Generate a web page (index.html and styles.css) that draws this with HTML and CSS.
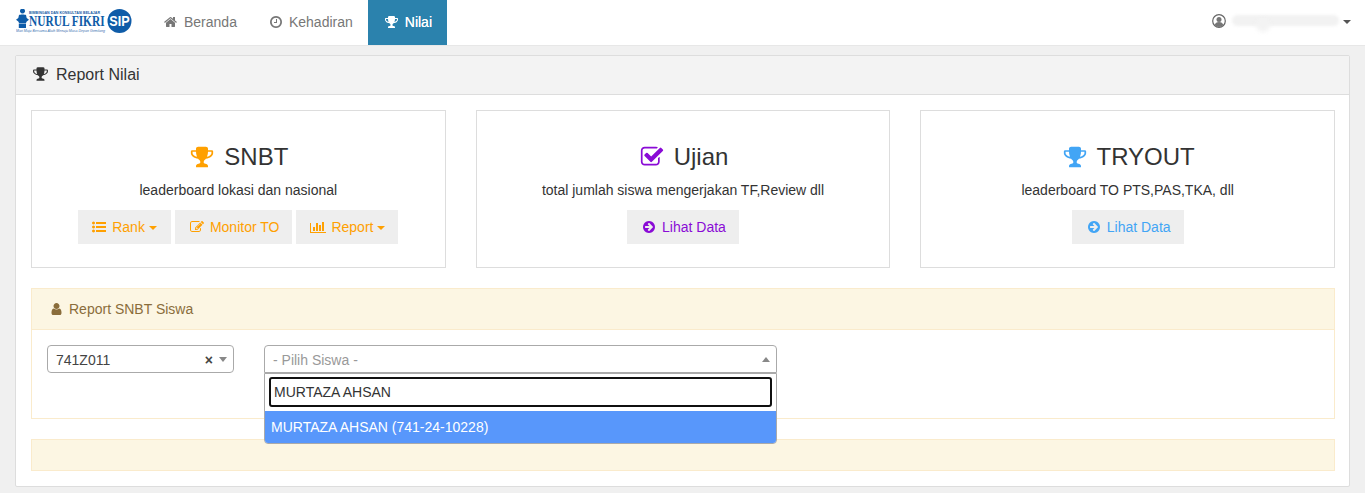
FILE: index.html
```html
<!DOCTYPE html>
<html lang="id">
<head>
<meta charset="utf-8">
<title>Report Nilai</title>
<link rel="stylesheet" href="styles.css">
</head>
<body>
<svg class="defs" width="0" height="0" aria-hidden="true">
  <symbol id="i-trophy" viewBox="64 0 1664 1792"><path d="M522 883q-74-162-74-371h-256v96q0 78 94.5 162t235.5 113zm1078-275v-96h-256q0 209-74 371 141-29 235.5-113t94.5-162zm128-128v128q0 71-41.5 143t-112 130-173 97.5-215.5 44.5q-42 54-95 95-38 34-52.5 72.5t-14.5 89.5q0 54 30.5 91t97.5 37q75 0 133.5 45.5t58.5 114.5v64q0 14-9 23t-23 9h-832q-14 0-23-9t-9-23v-64q0-69 58.5-114.5t133.5-45.5q67 0 97.5-37t30.5-91q0-51-14.5-89.5t-52.5-72.5q-53-41-95-95-113-5-215.5-44.5t-173-97.5-112-130-41.5-143v-128q0-40 28-68t68-28h288v-96q0-66 47-113t113-47h576q66 0 113 47t47 113v96h288q40 0 68 28t28 68z"/></symbol>
  <symbol id="i-home" viewBox="64 0 1664 1792"><path d="M1472 992v480q0 26-19 45t-45 19h-384v-384h-256v384h-384q-26 0-45-19t-19-45v-480q0-1 .5-3t.5-3l575-474 575 474q1 2 1 6zm223-69l-62 74q-8 9-21 11h-3q-13 0-21-7l-692-577-692 577q-12 8-24 7-13-2-21-11l-62-74q-8-10-7-23.5t11-21.5l719-599q32-26 76-26t76 26l244 204v-195q0-14 9-23t23-9h192q14 0 23 9t9 23v408l219 182q10 8 11 21.5t-7 23.5z"/></symbol>
  <symbol id="i-clock" viewBox="128 0 1536 1792"><path d="M1024 544v448q0 14-9 23t-23 9h-320q-14 0-23-9t-9-23v-64q0-14 9-23t23-9h224v-352q0-14 9-23t23-9h64q14 0 23 9t9 23zm416 352q0-148-73-273t-198-198-273-73-273 73-198 198-73 273 73 273 198 198 273 73 273-73 198-198 73-273zm224 0q0 209-103 385.5t-279.5 279.5-385.5 103-385.5-103-279.5-279.5-103-385.5 103-385.5 279.5-279.5 385.5-103 385.5 103 279.5 279.5 103 385.5z"/></symbol>
  <symbol id="i-user" viewBox="256 0 1280 1792"><path d="M1536 1399q0 109-62.5 187t-150.5 78h-854q-88 0-150.5-78t-62.5-187q0-85 8.5-160.5t31.5-152 58.5-131 94-89 134.5-34.5q131 128 313 128t313-128q76 0 134.5 34.5t94 89 58.5 131 31.5 152 8.5 160.5zm-256-887q0 159-112.5 271.5t-271.5 112.5-271.5-112.5-112.5-271.5 112.5-271.5 271.5-112.5 271.5 112.5 112.5 271.5z"/></symbol>
  <symbol id="i-list" viewBox="0 0 1792 1792"><path d="M384 1408q0 80-56 136t-136 56-136-56-56-136 56-136 136-56 136 56 56 136zm0-512q0 80-56 136t-136 56-136-56-56-136 56-136 136-56 136 56 56 136zm1408 416v192q0 13-9.5 22.5t-22.5 9.5h-1216q-13 0-22.5-9.5t-9.5-22.5v-192q0-13 9.5-22.5t22.5-9.5h1216q13 0 22.5 9.5t9.5 22.5zm-1408-928q0 80-56 136t-136 56-136-56-56-136 56-136 136-56 136 56 56 136zm1408 416v192q0 13-9.5 22.5t-22.5 9.5h-1216q-13 0-22.5-9.5t-9.5-22.5v-192q0-13 9.5-22.5t22.5-9.5h1216q13 0 22.5 9.5t9.5 22.5zm0-512v192q0 13-9.5 22.5t-22.5 9.5h-1216q-13 0-22.5-9.5t-9.5-22.5v-192q0-13 9.5-22.5t22.5-9.5h1216q13 0 22.5 9.5t9.5 22.5z"/></symbol>
  <symbol id="i-edit" viewBox="0 0 1792 1792"><path d="M888 1184l116-116-152-152-116 116v56h96v96h56zm440-720q-16-16-33 1l-350 350q-17 17-1 33t33-1l350-350q17-17 1-33zm80 594v190q0 119-84.5 203.5t-203.5 84.5h-832q-119 0-203.5-84.5t-84.5-203.5v-832q0-119 84.5-203.5t203.5-84.5h832q63 0 117 25 15 7 18 23 3 17-9 29l-49 49q-14 14-32 8-23-6-45-6h-832q-66 0-113 47t-47 113v832q0 66 47 113t113 47h832q66 0 113-47t47-113v-126q0-13 9-22l64-64q15-15 35-7t20 29zm-96-738l288 288-672 672h-288v-288zm444 132l-92 92-288-288 92-92q28-28 68-28t68 28l152 152q28 28 28 68t-28 68z"/></symbol>
  <symbol id="i-chart" viewBox="0 0 2048 1792"><path d="M640 896v512h-256v-512h256zm384-512v1024h-256v-1024h256zm1024 1152v128h-2048v-1280h128v1152h1920zm-640-896v768h-256v-768h256zm384-384v1152h-256v-1152h256z"/></symbol>
  <symbol id="i-check" viewBox="64 0 1664 1792"><path d="M1472 930v318q0 119-84.5 203.5t-203.5 84.5h-832q-119 0-203.5-84.5t-84.5-203.5v-832q0-119 84.5-203.5t203.5-84.5h832q63 0 117 25 15 7 18 23 3 17-9 29l-49 49q-10 10-23 10-3 0-9-2-23-6-45-6h-832q-66 0-113 47t-47 113v832q0 66 47 113t113 47h832q66 0 113-47t47-113v-254q0-13 9-22l64-64q10-10 23-10 6 0 12 3 20 8 20 29zm231-489l-814 814q-24 24-57 24t-57-24l-430-430q-24-24-24-57t24-57l110-110q24-24 57-24t57 24l263 263 647-647q24-24 57-24t57 24l110 110q24 24 24 57t-24 57z"/></symbol>
  <symbol id="i-arrow" viewBox="128 0 1536 1792"><path d="M1413 896q0-27-18-45l-91-91-362-362q-18-18-45-18t-45 18l-91 91q-18 18-18 45t18 45l189 189h-502q-26 0-45 19t-19 45v128q0 26 19 45t45 19h502l-189 189q-19 19-19 45t19 45l91 91q18 18 45 18t45-18l362-362 91-91q18-18 18-45zm251 0q0 209-103 385.5t-279.5 279.5-385.5 103-385.5-103-279.5-279.5-103-385.5 103-385.5 279.5-279.5 385.5-103 385.5 103 279.5 279.5 103 385.5z"/></symbol>
</svg>

<nav class="navbar">
  <div class="brand">
    <svg class="logo" viewBox="0 0 116 25" width="116" height="25">
      <path class="logo-fig" d="M6.500 4.500a2.500 2.500 0 1 1 .01 0zM3 6c1-.8 6-.8 7 0l.7 3 2.300 1.700-2.300 1.800-.7 1.500H3l-.7-1.500L0 10.700l2.300-1.700z"/>
      <rect class="logo-fig" x="2.800" y="14.500" width="7.200" height="4.500"/>
      <text class="logo-top" x="13" y="4.500" textLength="71" lengthAdjust="spacingAndGlyphs">BIMBINGAN DAN KONSULTASI BELAJAR</text>
      <text class="logo-name" transform="translate(13 17) scale(.76 1)">NURUL FIKRI</text>
      <text class="logo-sub" x="0" y="22.800" textLength="89" lengthAdjust="spacingAndGlyphs">Mari Maju Bersama Alaih Menuju Masa Depan Gemilang</text>
      <circle class="logo-fig" cx="103.500" cy="12" r="12"/>
      <text class="logo-sip" text-anchor="middle" transform="translate(103.500 17) scale(.9 1)">SIP</text>
    </svg>
  </div>
  <ul class="nav">
    <li><a class="nav-link nav-home"><svg class="ic w13"><use href="#i-home"/></svg>Beranda</a></li>
    <li><a class="nav-link nav-hadir"><svg class="ic w12"><use href="#i-clock"/></svg>Kehadiran</a></li>
    <li><a class="nav-link nav-active"><svg class="ic w13"><use href="#i-trophy"/></svg>Nilai</a></li>
  </ul>
  <div class="nav-user">
    <svg class="user-ic" viewBox="0 0 14 14" width="14" height="14">
      <circle cx="7" cy="7" r="6.300" fill="#fff" stroke="#666" stroke-width="1.200"/>
      <circle cx="7" cy="5.400" r="2.500" fill="#777"/>
      <path d="M2.700 11c.5-2 2-3 4.300-3s3.800 1 4.300 3c-1 1.300-2.500 2-4.300 2s-3.300-.7-4.300-2z" fill="#777"/>
    </svg>
    <span class="blur-name"><span class="blur-bar"></span><span class="blur-dot"></span></span>
    <span class="caret nav-caret"></span>
  </div>
</nav>

<main class="panel main-panel">
  <header class="panel-head">
    <svg class="ic w15"><use href="#i-trophy"/></svg>Report Nilai
  </header>
  <div class="panel-content">
    <section class="cards">
      <article class="card">
        <h3 class="card-title"><svg class="ic big orange"><use href="#i-trophy"/></svg>SNBT</h3>
        <p class="card-text">leaderboard lokasi dan nasional</p>
        <div class="btn-row">
          <a class="btn btn-rank c-orange"><svg class="ic w14"><use href="#i-list"/></svg>Rank<span class="caret"></span></a>
          <a class="btn btn-wide c-orange"><svg class="ic w14"><use href="#i-edit"/></svg>Monitor TO</a>
          <a class="btn c-orange"><svg class="ic w16"><use href="#i-chart"/></svg>Report<span class="caret"></span></a>
        </div>
      </article>
      <article class="card">
        <h3 class="card-title"><svg class="ic big purple"><use href="#i-check"/></svg>Ujian</h3>
        <p class="card-text">total jumlah siswa mengerjakan TF,Review dll</p>
        <div class="btn-row">
          <a class="btn btn-data c-purple"><svg class="ic w12"><use href="#i-arrow"/></svg>Lihat Data</a>
        </div>
      </article>
      <article class="card">
        <h3 class="card-title"><svg class="ic big blue"><use href="#i-trophy"/></svg>TRYOUT</h3>
        <p class="card-text">leaderboard TO PTS,PAS,TKA, dll</p>
        <div class="btn-row">
          <a class="btn btn-data c-blue"><svg class="ic w12"><use href="#i-arrow"/></svg>Lihat Data</a>
        </div>
      </article>
    </section>

    <section class="warn-panel">
      <header class="warn-head"><svg class="ic w11"><use href="#i-user"/></svg>Report SNBT Siswa</header>
      <div class="warn-body">
        <div class="select select-lokasi">
          <span class="sel-value">741Z011</span>
          <span class="sel-clear">×</span>
          <span class="sel-arrow"></span>
        </div>
        <div class="select select-siswa">
          <span class="sel-placeholder">- Pilih Siswa -</span>
          <span class="sel-arrow up"></span>
          <div class="dropdown">
            <div class="search-wrap"><input class="search" type="text" value="MURTAZA AHSAN"></div>
            <div class="option">MURTAZA AHSAN (741-24-10228)</div>
          </div>
        </div>
      </div>
    </section>

    <div class="warn-empty"></div>
  </div>
</main>
</body>
</html>
```
FILE: styles.css
```css
* { box-sizing: border-box; }
html, body { margin: 0; padding: 0; }
body {
  background: #f0f0f0;
  color: #333;
  font-family: "Liberation Sans", Arial, sans-serif;
  font-size: 14px;
  line-height: 20px;
  height: 493px;
  overflow: hidden;
}
.defs { position: absolute; }
.ic { display: inline-block; height: 14px; fill: currentColor; vertical-align: -2px; margin-right: 7px; flex: none; }
.w11 { width: 11px; }
.w12 { width: 12px; }
.w13 { width: 13px; }
.w14 { width: 14px; }
.w15 { width: 15px; height: 16px; vertical-align: -2px; margin-right: 8px; }
.w16 { width: 16px; }

.navbar {
  display: flex;
  align-items: stretch;
  height: 46px;
  background: #fff;
  border-bottom: 1px solid #e7e7e7;
  padding-right: 14px;
}
.brand { display: flex; align-items: flex-start; padding: 9px 0 0 16px; width: 149px; }
.logo { display: block; }
.logo-fig { fill: #0f5ca8; }
.logo-top { font: bold 3px "Liberation Sans", sans-serif; fill: #1b5da6; }
.logo-name { font: bold 15px "Liberation Serif", serif; fill: #0f5ca8; }
.logo-sub { font: italic 3.500px "Liberation Sans", sans-serif; fill: #3b6fb0; }
.logo-sip { font: bold 14px "Liberation Sans", sans-serif; fill: #fff; }

.nav { display: flex; list-style: none; margin: 0; padding: 0; }
.nav-link { display: block; height: 45px; padding: 12px 15px; color: #777; white-space: nowrap; }
.nav-hadir { margin-left: 3px; }
.nav-active { background: #2b82ad; color: #fff; padding-left: 17px; text-shadow: 0 0 .6px #fff; }

.nav-user { margin-left: auto; display: flex; align-items: center; height: 45px; }
.user-ic { margin-right: 6px; margin-top: -4px; }
.blur-name { display: block; position: relative; width: 107px; height: 11px; margin-top: -5px; }
.blur-bar { position: absolute; inset: 0; background: #f2f2f2; border-radius: 6px; filter: blur(1.500px); }
.blur-dot { position: absolute; left: 24px; top: 3px; width: 14px; height: 14px; background: #f3f3f3; border-radius: 50%; filter: blur(2px); }
.caret {
  display: inline-block;
  width: 0; height: 0;
  border-top: 4px solid currentColor;
  border-left: 4px solid transparent;
  border-right: 4px solid transparent;
  vertical-align: middle;
  margin-left: 4px;
}
.nav-caret { color: #555; margin-top: -2px; }

.panel { margin: 9px 15px 0; }
.main-panel { height: 432px; background: #fff; border: 1px solid #ddd; border-radius: 2px; }
.panel-head {
  height: 39px;
  padding: 9px 17px;
  background: #f3f3f3;
  border-bottom: 1px solid #ddd;
  font-size: 16px;
  line-height: 20px;
}
.panel-content { padding: 15px 14px 15px 15px; }

.cards { display: grid; grid-template-columns: repeat(3, 1fr); column-gap: 30px; }
.card {
  height: 158px;
  padding: 33px 15px 0;
  border: 1px solid #ddd;
  text-align: center;
}
.card-title { margin: 0; padding-left: 2px; font-size: 24px; font-weight: 400; line-height: 26px; }
.ic.big { width: 24px; height: 24px; margin-right: 10px; vertical-align: -4px; }
.orange { color: #ffa000; fill: #ffa000; }
.purple { color: #8a0bd6; fill: #8a0bd6; }
.blue { color: #42a5f5; fill: #42a5f5; }
.card-text { margin: 10px 0; line-height: 20px; }
.btn-row { display: flex; justify-content: center; gap: 4px; }
.btn {
  display: block;
  height: 34px;
  padding: 7px 13px 7px 14px;
  background: #eee;
  white-space: nowrap;
}
.btn-rank { padding-right: 14px; }
.btn-wide { padding-left: 15px; }
.btn-data { padding-left: 16px; }
.c-orange { color: #ffa000; }
.c-purple { color: #8a0bd6; }
.c-blue { color: #42a5f5; }
.btn .w12 { margin-right: 7px; }
.btn .w14 { margin-right: 6px; }
.btn .w16 { margin-right: 5px; }

.warn-panel { margin-top: 20px; height: 131px; border: 1px solid #faebcc; }
.warn-head {
  height: 41px;
  padding: 10px 19px;
  background: #fcf6e3;
  border-bottom: 1px solid #faebcc;
  color: #8a6d3b;
}
.warn-body { display: flex; gap: 30px; padding: 15px; }
.select {
  position: relative;
  height: 28px;
  background: #fff;
  border: 1px solid #aaa;
  border-radius: 4px;
  line-height: 28px;
  padding-left: 8px;
}
.select-lokasi { width: 187px; }
.select-siswa { width: 513px; border-radius: 4px 4px 0 0; }
.sel-value { color: #444; }
.sel-placeholder { color: #999; }
.sel-clear {
  position: absolute;
  right: 20px; top: 0;
  font-weight: 700;
  color: #444;
}
.sel-arrow {
  position: absolute;
  right: 6px; top: 11px;
  width: 0; height: 0;
  border-top: 5px solid #888;
  border-left: 4px solid transparent;
  border-right: 4px solid transparent;
}
.sel-arrow.up { border-top: 0; border-bottom: 5px solid #888; }

.dropdown {
  position: absolute;
  left: -1px; right: -1px; top: 27px;
  z-index: 5;
  background: #fff;
  border: 1px solid #aaa;
  border-radius: 0 0 4px 4px;
  overflow: hidden;
  line-height: 20px;
}
.search-wrap { padding: 3px 4px 4px; height: 37px; }
.search {
  display: block;
  width: 100%;
  height: 30px;
  padding: 0 3px;
  border: 2px solid #101010;
  border-radius: 3px;
  background: #fff;
  color: #333;
  font: 14px/20px "Liberation Sans", Arial, sans-serif;
  outline: 0;
}
.option { height: 32px; padding: 6px; background: #5897fb; color: #fff; }

.warn-empty { margin-top: 20px; height: 32px; background: #fcf6e3; border: 1px solid #faebcc; }
```
